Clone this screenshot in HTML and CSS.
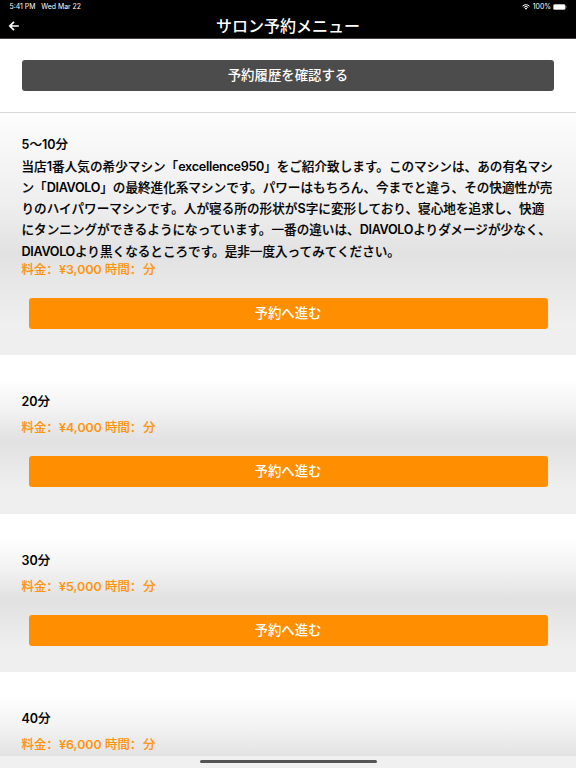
FILE: index.html
```html
<!DOCTYPE html>
<html lang="ja">
<head>
<meta charset="utf-8">
<title>サロン予約メニュー</title>
<link rel="stylesheet" href="styles.css">
</head>
<body>
<div class="app">
  <header class="header">
    <div class="status">
      <span class="time">5:41 PM</span>
      <span class="date">Wed Mar 22</span>
      <svg class="wifi" viewBox="0 0 16 12"><path d="M1 4.3a10 10 0 0 1 14 0M3.5 7a6.4 6.4 0 0 1 9 0" fill="none" stroke="#fff" stroke-width="2"/><path d="M5.6 8.8a3.5 3.5 0 0 1 4.8 0L8 11.5z" fill="#fff"/></svg>
      <span class="percent">100%</span>
      <svg class="battery" viewBox="0 0 14 6"><rect x=".3" y=".3" width="12" height="5.4" rx="1.5" fill="#fff" stroke="#999" stroke-width=".5"/><path d="M13 2v2q.7-.3.7-1t-.7-1" fill="#999"/></svg>
    </div>
    <div class="nav">
      <svg class="back" viewBox="0 0 12 12"><path d="M10.8 6H2M6 1.8 1.8 6 6 10.2" fill="none" stroke="#fff" stroke-width="1.7"/></svg>
      <h1 class="title">サロン予約メニュー</h1>
    </div>
  </header>
  <section class="history"><button class="button button-dark">予約履歴を確認する</button></section>
  <main class="menu">
    <article class="item item-first">
      <h2 class="name"><span class="digits">5</span>〜<span class="digits">10</span>分</h2>
      <p class="description">
        <span class="line line-a">当店<span class="digits">1</span>番人気の希少マシン「<span class="latin">excellence950</span>」をご紹介致します。このマシンは、あの有名マシ</span>
        <span class="line">ン「<span class="latin">DIAVOLO</span>」の最終進化系マシンです。パワーはもちろん、今までと違う、その快適性が売</span>
        <span class="line line-c">りのハイパワーマシンです。人が寝る所の形状が<span class="digits">S</span>字に変形しており、寝心地を追求し、快適</span>
        <span class="line line-d">にタンニングができるようになっています。一番の違いは、<span class="latin">DIAVOLO</span>よりダメージが少なく、</span>
        <span class="line"><span class="latin">DIAVOLO</span>より黒くなるところです。是非一度入ってみてください。</span>
      </p>
      <p class="price"><span class="fee">料金<span lang="zh-CN">：</span></span><span class="amount">¥3,000</span><span class="duration">時間<span lang="zh-CN">：</span></span><span>分</span></p>
      <button class="button button-orange">予約へ進む</button>
    </article>
    <article class="item">
      <h2 class="name"><span class="digits">20</span>分</h2>
      <p class="price"><span class="fee">料金<span lang="zh-CN">：</span></span><span class="amount">¥4,000</span><span class="duration">時間<span lang="zh-CN">：</span></span><span>分</span></p>
      <button class="button button-orange">予約へ進む</button>
    </article>
    <article class="item">
      <h2 class="name"><span class="digits">30</span>分</h2>
      <p class="price"><span class="fee">料金<span lang="zh-CN">：</span></span><span class="amount">¥5,000</span><span class="duration">時間<span lang="zh-CN">：</span></span><span>分</span></p>
      <button class="button button-orange">予約へ進む</button>
    </article>
    <article class="item">
      <h2 class="name"><span class="digits">40</span>分</h2>
      <p class="price"><span class="fee">料金<span lang="zh-CN">：</span></span><span class="amount">¥6,000</span><span class="duration">時間<span lang="zh-CN">：</span></span><span>分</span></p>
    </article>
  </main>
  <footer class="home"><div class="home-bar"></div></footer>
</div>
</body>
</html>
```
FILE: styles.css
```css
* { box-sizing: border-box; }
body, h1, h2, p { margin: 0; }
body { font-family: Inter, "Noto Sans CJK JP", sans-serif; color: #111; background: #fff; }
.app { height: 768px; display: flex; flex-direction: column; overflow: hidden; }
.header { flex: none; height: 39px; background: #000; color: #fff; border-bottom: 1px solid #483f42; }
.status { height: 14px; display: flex; align-items: center; padding: 0 9px 0 9.5px; font-size: 6.9px; line-height: 14px; font-weight: 400; }
.date { margin-left: 6px; }
.wifi { width: 8px; height: 6px; margin-left: auto; }
.percent { margin: 0 2px 0 2.5px; }
.battery { width: 14px; height: 6px; }
.nav { height: 24px; display: grid; grid-template-columns: 20px 1fr 20px; align-items: center; padding: 0 8px; }
.back { width: 12px; height: 12px; }
.title { font-size: 16px; line-height: 24px; font-weight: 500; text-align: center; }
.history { flex: none; height: 74px; padding: 21px 22px 0; border-bottom: 1px solid #d8d8d8; background: #fff; }
.button { display: block; width: 100%; height: 31px; border: 0; border-radius: 3px; padding: 0; color: #fff; font: 500 13.4px/31px Inter, "Noto Sans CJK JP", sans-serif; text-align: center; }
.button-dark { background: #4c4c4c; }
.button-orange { background: #ff8f00; width: 519px; margin: 19.3px 0 0 7px; }
.menu { flex: 1; min-height: 0; overflow: hidden; background: #efefef; }
.item { height: 158.5px; padding: 36px 21.5px 0; background: linear-gradient(#fff 0%, #fff 15%, #f2f2f2 35%, #e1e1e1 54%, #efefef 85%, #efefef 100%); }
.item-first { height: 242.3px; padding-top: 21px; background: linear-gradient(#fdfdfd 0%, #f8f8f8 12%, #eee 38%, #e2e2e2 58%, #efefef 88%, #efefef 100%); }
.name { font-size: 12.5px; line-height: 21px; font-weight: 500; color: #000; -webkit-text-stroke: .15px; }
.description { margin-top: .6px; height: 105.2px; font-size: 12.6px; line-height: 21.25px; font-weight: 500; color: #000; -webkit-text-stroke: .15px; }
.line { display: block; white-space: nowrap; }
.line-a { letter-spacing: .02px; }
.line-c { letter-spacing: .03px; }
.line-d { letter-spacing: .01px; }
.latin { letter-spacing: -.3px; }
.latin, .digits, .amount { font-weight: 600; -webkit-text-stroke: 0; }
.price { display: flex; height: 18px; margin-top: 6.8px; font: 500 12.4px/18px Inter, "Noto Sans CJK JP", sans-serif; color: #ff950f; white-space: nowrap; -webkit-text-stroke: .15px; }
.price [lang] { font-family: "Noto Sans CJK SC", sans-serif; line-height: 1; }
.item-first .price { margin-top: 0; }
.fee { width: 37.5px; }
.amount { width: 46px; }
.duration { width: 38px; }
.home { flex: none; height: 12px; background: #f0f0f0; padding-top: 4px; }
.home-bar { width: 177px; height: 3px; border-radius: 2px; margin: 0 auto; background: #555; }
```
